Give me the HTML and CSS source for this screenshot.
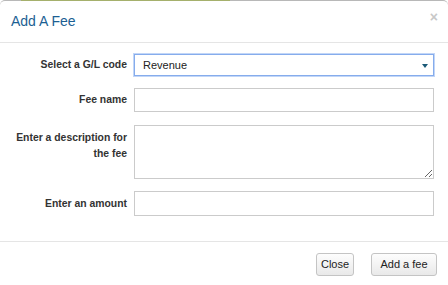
FILE: index.html
```html
<!DOCTYPE html>
<html>
<head>
<meta charset="utf-8">
<link rel="stylesheet" href="styles.css">
</head>
<body>
<div class="modal">
  <div class="topline"><span class="green"></span></div>
  <div class="modal-header">
    <h4 class="title">Add A Fee</h4>
    <span class="close">&times;</span>
  </div>
  <div class="modal-body">
    <div class="row center">
      <label class="lbl">Select a G/L code</label>
      <div class="select">Revenue<span class="caret"></span></div>
    </div>
    <div class="row center">
      <label class="lbl">Fee name</label>
      <input class="input" type="text">
    </div>
    <div class="row">
      <label class="lbl top">Enter a description for the fee</label>
      <textarea class="area"></textarea>
    </div>
    <div class="row center">
      <label class="lbl">Enter an amount</label>
      <input class="input amount" type="text">
    </div>
  </div>
  <div class="modal-footer">
    <button class="btn btn-close">Close</button>
    <button class="btn btn-add">Add a fee</button>
  </div>
</div>
</body>
</html>
```
FILE: styles.css
```css
html, body {
  margin: 0;
  padding: 0;
  background: #ffffff;
  font-family: "Liberation Sans", Arial, sans-serif;
}
.modal {
  position: relative;
  width: 448px;
  height: 285px;
  box-sizing: border-box;
  border-top: 1px solid #b8b8b8;
  border-radius: 5px 5px 0 0;
  background: #fff;
}
.topline {
  position: absolute;
  top: -1px;
  left: 0;
  right: 0;
  height: 1px;
}
.green {
  position: absolute;
  left: 21px;
  width: 209px;
  height: 1px;
  background: #a5b06c;
}
.modal-header {
  height: 41px;
  border-bottom: 1px solid #e5e5e5;
  display: flex;
  align-items: flex-start;
  justify-content: space-between;
  padding: 0 11px;
}
.title {
  margin: 0;
  padding-top: 12px;
  font-size: 14px;
  font-weight: normal;
  color: #1c5f93;
  line-height: 16px;
}
.close {
  color: #c8c8c8;
  font-size: 14px;
  font-weight: bold;
  padding-top: 8px;
  margin-right: -1px;
  line-height: 16px;
}
.modal-body {
  padding: 11px 14px 25px 0;
  display: flex;
  flex-direction: column;
  gap: 12px;
}
.row {
  display: flex;
  align-items: flex-start;
}
.row.center {
  align-items: center;
}
.lbl {
  width: 127px;
  padding-right: 7px;
  box-sizing: content-box;
  text-align: right;
  font-size: 10.4px;
  font-weight: bold;
  color: #333;
  line-height: 15.5px;
}
.lbl.top {
  padding-top: 6px;
}
.select {
  position: relative;
  width: 300px;
  height: 22px;
  box-sizing: border-box;
  border: 1px solid #86acec;
  box-shadow: 0 0 0 1px #c2d6f7;
  font-size: 11px;
  color: #222;
  line-height: 20px;
  padding-left: 8px;
}
.caret {
  position: absolute;
  right: 5px;
  top: 9px;
  width: 0;
  height: 0;
  border-left: 3px solid transparent;
  border-right: 3px solid transparent;
  border-top: 4px solid #1b5a78;
}
.input {
  width: 300px;
  height: 24px;
  box-sizing: border-box;
  border: 1px solid #cbcbcb;
  margin: 0;
  padding: 0 6px;
  font-family: inherit;
  font-size: 11px;
  outline: none;
}
.input.amount {
  height: 25px;
}
.area {
  width: 300px;
  height: 54px;
  box-sizing: border-box;
  border: 1px solid #cbcbcb;
  margin: 1px 0 0;
  padding: 4px 6px;
  font-family: inherit;
  font-size: 11px;
  outline: none;
  resize: vertical;
  display: block;
}
.modal-footer {
  border-top: 1px solid #e5e5e5;
  display: flex;
  justify-content: flex-end;
  gap: 17px;
  padding: 11px 11px 0 0;
}
.btn {
  height: 23px;
  margin: 0;
  padding: 0;
  border: 1px solid #c4c4c4;
  border-radius: 3px;
  background: linear-gradient(#fdfdfd, #e9e9e9);
  font-family: "Liberation Sans", Arial, sans-serif;
  font-size: 11px;
  color: #222;
  line-height: 21px;
  text-align: center;
}
.btn-close {
  width: 38px;
}
.btn-add {
  width: 66px;
}
```
